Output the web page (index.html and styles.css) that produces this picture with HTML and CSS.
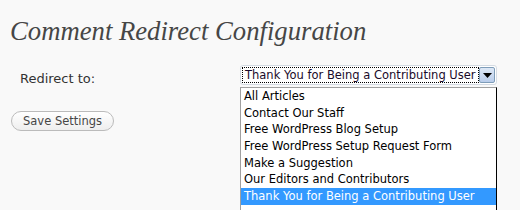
FILE: index.html
```html
<!DOCTYPE html>
<html>
<head>
<meta charset="utf-8">
<link rel="stylesheet" href="styles.css">
</head>
<body>
<div class="wrap">
  <h2 class="title">Comment Redirect Configuration</h2>
  <div class="form-row">
    <label class="label">Redirect to:</label>
    <div class="select-wrap">
      <div class="select">
        <span class="select-value">Thank You for Being a Contributing User</span>
        <span class="select-arrow"><svg width="9" height="5" viewBox="0 0 9 5"><path d="M0 0H9L4.5 5Z" fill="#000"/></svg></span>
      </div>
      <ul class="dropdown">
        <li class="option">All Articles</li>
        <li class="option">Contact Our Staff</li>
        <li class="option">Free WordPress Blog Setup</li>
        <li class="option">Free WordPress Setup Request Form</li>
        <li class="option">Make a Suggestion</li>
        <li class="option">Our Editors and Contributors</li>
        <li class="option selected">Thank You for Being a Contributing User</li>
      </ul>
    </div>
  </div>
  <button class="button">Save Settings</button>
</div>
</body>
</html>
```
FILE: styles.css
```css
html, body {
  margin: 0;
  padding: 0;
  background: #f9f9f9;
  height: 100%;
  overflow: hidden;
}
.wrap {
  padding: 17px 0 0 10px;
  font-family: "DejaVu Sans", Verdana, sans-serif;
}
.title {
  margin: 0;
  font-family: "Liberation Serif", Georgia, serif;
  font-style: italic;
  font-weight: normal;
  font-size: 26.7px;
  line-height: 29px;
  color: #464646;
}
.form-row {
  display: grid;
  grid-template-columns: 230px 258px;
  margin-top: 19px;
  height: 20px;
}
.label {
  padding: 6px 0 0 10px;
  font-size: 13px;
  line-height: 15px;
  color: #333;
}
.select-wrap {
  position: relative;
}
.select {
  box-sizing: border-box;
  height: 20px;
  width: 257px;
  background: #fff;
  border: 1px solid #d4dbe3;
  border-radius: 3px;
  padding: 1px;
  display: flex;
  font-family: "DejaVu Sans", Tahoma, sans-serif;
  font-size: 11.5px;
}
.select-value {
  flex: 1;
  border: 1px dotted #000;
  padding: 0 2px;
  line-height: 14px;
  white-space: nowrap;
  overflow: hidden;
  color: #1a0a2a;
}
.select-arrow {
  width: 16px;
  box-sizing: border-box;
  border: 1px solid #7f9db9;
  border-radius: 2px;
  background: linear-gradient(#dde8f6, #b9cdeb);
  display: flex;
  align-items: center;
  justify-content: center;
}
.dropdown {
  position: absolute;
  top: 22px;
  left: 0;
  width: 257px;
  box-sizing: border-box;
  margin: 0;
  padding: 0 0 12px;
  list-style: none;
  background: #fff;
  border: 1px solid #000;
  border-left-color: #a0a0a0;
  border-top-color: #a0a0a0;
  font-family: "DejaVu Sans", Tahoma, sans-serif;
  font-size: 11.5px;
  color: #000;
}
.option {
  height: 16.7px;
  line-height: 17.5px;
  padding-left: 3px;
  white-space: nowrap;
}
.option.selected {
  background: #3399ff;
  color: #fff;
}
.button {
  display: block;
  margin: 26px 0 0 1px;
  height: 20px;
  padding: 0 11px;
  border: 1px solid #bbb;
  border-radius: 11px;
  background: linear-gradient(#ffffff, #eeeeee);
  font-family: "DejaVu Sans", Verdana, sans-serif;
  font-size: 11.5px;
  color: #464646;
}
```
